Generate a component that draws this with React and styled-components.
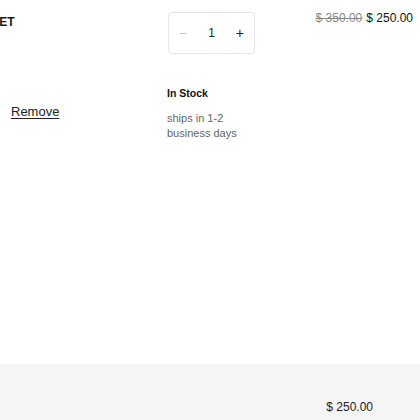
import React from 'react';
import styled, { createGlobalStyle } from 'styled-components';

const GlobalStyle = createGlobalStyle`
  html, body {
    margin: 0;
    padding: 0;
    background: #fff;
    overflow: hidden;
  }
  body {
    font-family: "Liberation Sans", Arial, sans-serif;
    color: #111;
  }
`;

const Page = styled.div`
  display: flex;
  flex-direction: column;
  height: 420px;
  overflow: hidden;
`;

const Item = styled.div`
  flex: 1;
  display: grid;
  grid-template-columns: 167px 140px 1fr;
  padding-top: 10px;
`;

const Details = styled.div`
  display: flex;
  flex-direction: column;
  align-items: flex-start;
  padding-left: 11px;
`;

const Title = styled.div`
  margin-top: 5px;
  margin-left: -69px;
  font-size: 12px;
  line-height: 15px;
  font-weight: 700;
  color: #1a1a1a;
  text-transform: uppercase;
  white-space: nowrap;
`;

const Remove = styled.button`
  margin-top: 74px;
  padding: 0;
  border: 0;
  background: none;
  font: inherit;
  font-size: 13px;
  line-height: 16px;
  color: #222;
  text-decoration: underline;
  text-underline-offset: 2px;
  cursor: pointer;
`;

const Middle = styled.div`
  display: flex;
  flex-direction: column;
  align-items: flex-start;
`;

const Stepper = styled.div`
  margin-top: 2px;
  margin-left: 1px;
  width: 87px;
  height: 42px;
  box-sizing: border-box;
  border: 1px solid #e4e4e4;
  border-radius: 4px;
  display: flex;
  align-items: center;
  justify-content: space-around;
`;

const StepButton = styled.button`
  border: 0;
  background: none;
  padding: 0;
  width: 20px;
  font: inherit;
  font-size: ${p => (p.$muted ? '13px' : '14px')};
  color: ${p => (p.$muted ? '#c4c4c4' : '#222')};
  cursor: pointer;
`;

const Qty = styled.span`
  width: 20px;
  text-align: center;
  font-size: 12px;
  color: #222;
`;

const Stock = styled.div`
  margin-top: 32px;
  font-size: 10.5px;
  line-height: 14px;
  font-weight: 700;
  color: #111;
`;

const Shipping = styled.div`
  margin-top: 11px;
  width: 80px;
  font-size: 11px;
  line-height: 15px;
  color: #666;
`;

const PriceCell = styled.div`
  display: flex;
  justify-content: flex-end;
  gap: 4px;
  padding-right: 7px;
  font-size: 12px;
  line-height: 16px;
`;

const OldPrice = styled.span`
  color: #888;
  text-decoration: line-through;
`;

const NewPrice = styled.span`
  color: #111;
`;

const Summary = styled.div`
  height: 56px;
  background: #f5f5f5;
  display: flex;
  justify-content: flex-end;
  align-items: flex-end;
  padding: 0 47px 5px 0;
  box-sizing: border-box;
`;

const Total = styled.span`
  font-size: 12px;
  line-height: 16px;
  color: #222;
`;

export default function App() {
  return (
    <>
      <GlobalStyle />
      <Page>
        <Item>
          <Details>
            <Title>Dinner Set</Title>
            <Remove>Remove</Remove>
          </Details>
          <Middle>
            <Stepper>
              <StepButton $muted>−</StepButton>
              <Qty>1</Qty>
              <StepButton>+</StepButton>
            </Stepper>
            <Stock>In Stock</Stock>
            <Shipping>ships in 1-2 business days</Shipping>
          </Middle>
          <PriceCell>
            <OldPrice>$ 350.00</OldPrice>
            <NewPrice>$ 250.00</NewPrice>
          </PriceCell>
        </Item>
        <Summary>
          <Total>$ 250.00</Total>
        </Summary>
      </Page>
    </>
  );
}
